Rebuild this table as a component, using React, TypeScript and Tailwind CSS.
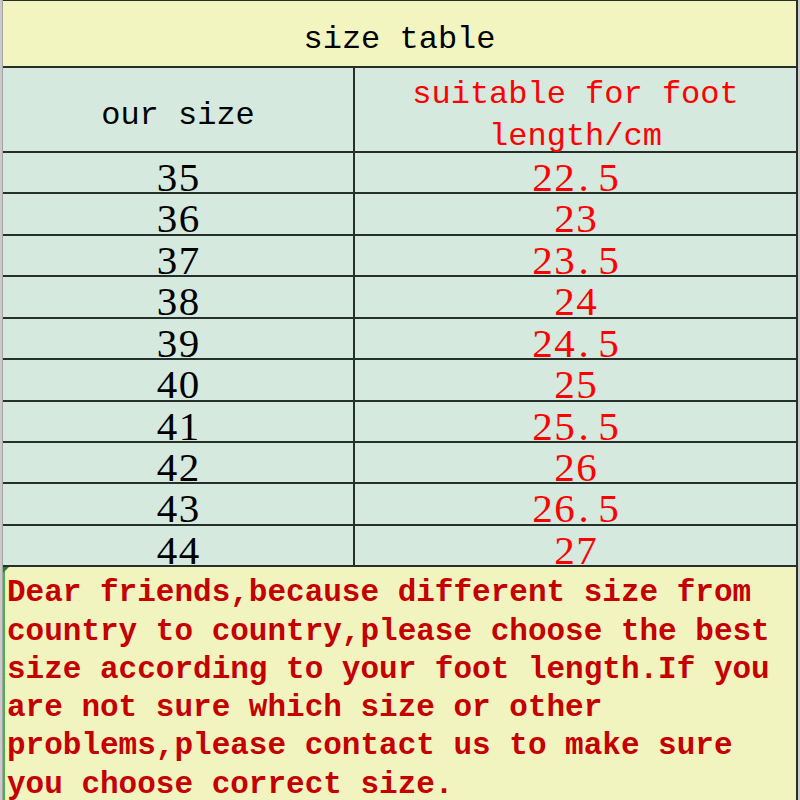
import React from 'react'

const rows = [
  { size: '35', foot: '22.5' },
  { size: '36', foot: '23' },
  { size: '37', foot: '23.5' },
  { size: '38', foot: '24' },
  { size: '39', foot: '24.5' },
  { size: '40', foot: '25' },
  { size: '41', foot: '25.5' },
  { size: '42', foot: '26' },
  { size: '43', foot: '26.5' },
  { size: '44', foot: '27' },
]

const note = [
  'Dear friends,because different size from',
  'country to country,please choose the best',
  'size according to your foot length.If you',
  'are not sure which size or other',
  'problems,please contact us to make sure',
  'you choose correct size.',
]

// half-width cells, like the spreadsheet font draws digits
function Cells({ text }: { text: string }) {
  return (
    <span className="inline-flex">
      {text.split('').map((ch, i) => (
        <span
          key={i}
          className={ch === '.' ? 'inline-block w-[22px] text-left pl-[3px]' : 'inline-block w-[22px] text-center'}
        >
          {ch}
        </span>
      ))}
    </span>
  )
}

export default function App() {
  return (
    <div className="w-[800px] h-[800px] flex bg-[#cacaca] overflow-hidden">
      <div className="w-[3px] h-full border-r border-[#a3a3a3]" />
      <div className="w-[795px] h-full flex flex-col border-r-2 border-[#25302b]">
        {/* Title */}
        <div className="h-[68px] shrink-0 bg-[#f3f5c1] border-t border-b-2 border-[#25302b] text-center pt-[21px] text-[32px] leading-[36px] text-black font-['Liberation_Mono',monospace]">
          size table
        </div>

        {/* Header */}
        <div className="h-[85px] shrink-0 flex bg-[#d5e9de] border-b-2 border-[#25302b] font-['Liberation_Mono',monospace] text-[32px]">
          <div className="w-[352px] border-r-2 border-[#25302b] text-center pt-[30px] leading-[36px] text-black">
            our size
          </div>
          <div className="flex-1 text-center pt-[12px] leading-[30px] text-[#ff0000]">
            <div>suitable for foot</div>
            <div className="mt-[12px]">length/cm</div>
          </div>
        </div>

        {/* Rows */}
        {rows.map((r) => (
          <div
            key={r.size}
            className="h-[41.43px] shrink-0 flex bg-[#d5e9de] border-b-2 border-[#25302b] font-['Liberation_Serif',serif] text-[41px] leading-[30px]"
          >
            <div className="w-[352px] border-r-2 border-[#25302b] text-center pt-[9px] text-black">
              <Cells text={r.size} />
            </div>
            <div className="flex-1 text-center pt-[9px] text-[#ff0000]">
              <Cells text={r.foot} />
            </div>
          </div>
        ))}

        {/* Note */}
        <div className="relative flex-1 bg-[#f2f4bf] border-l-2 border-[#4caf50] border-b-2 border-b-[#25302b] pt-[7px] pl-[2px] font-['Liberation_Mono',monospace] font-bold text-[31px] leading-[38.3px] text-[#c40000]">
          <div className="absolute -left-[2px] top-0 w-0 h-0 border-t-[6px] border-r-[6px] border-t-[#2e7d32] border-r-transparent" />
          {note.map((line, i) => (
            <div key={i} className="whitespace-pre">
              {line}
            </div>
          ))}
        </div>
      </div>
    </div>
  )
}
